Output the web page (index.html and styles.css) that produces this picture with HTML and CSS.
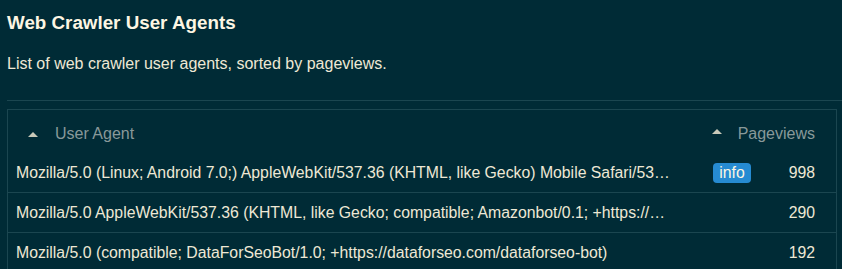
FILE: index.html
```html
<!DOCTYPE html>
<html lang="en">
<head>
<meta charset="utf-8">
<title>Web Crawler User Agents</title>
<link rel="stylesheet" href="styles.css">
</head>
<body>
<main class="page">
  <h1 class="title">Web Crawler User Agents</h1>
  <p class="subtitle">List of web crawler user agents, sorted by pageviews.</p>
  <hr class="rule">
  <div class="table">
    <div class="row head">
      <div class="cell ua"><span class="sort"></span><span>User Agent</span></div>
      <div class="cell views-head"><span class="sort"></span><span>Pageviews</span></div>
    </div>
    <div class="row">
      <div class="cell ua"><span class="ua-text">Mozilla/5.0 (Linux; Android 7.0;) AppleWebKit/537.36 (KHTML, like Gecko) Mobile Safari/537.36 (compatible; PetalBot;+https://webmaster.petalsearch.com/site/petalbot)</span></div>
      <div class="cell badge-cell"><span class="badge">info</span></div>
      <div class="cell views">998</div>
    </div>
    <div class="row">
      <div class="cell ua"><span class="ua-text">Mozilla/5.0 AppleWebKit/537.36 (KHTML, like Gecko; compatible; Amazonbot/0.1; +https://developer.amazon.com/support/amazonbot) Chrome/119.0.6045.214 Safari/537.36</span></div>
      <div class="cell badge-cell"></div>
      <div class="cell views">290</div>
    </div>
    <div class="row">
      <div class="cell ua"><span class="ua-text">Mozilla/5.0 (compatible; DataForSeoBot/1.0; +https://dataforseo.com/dataforseo-bot)</span></div>
      <div class="cell badge-cell"></div>
      <div class="cell views">192</div>
    </div>
  </div>
</main>
</body>
</html>
```
FILE: styles.css
```css
*, *::before, *::after {
  box-sizing: border-box;
}
html, body {
  margin: 0;
  padding: 0;
  background: #002b36;
}
body {
  font-family: "Liberation Sans", Arial, sans-serif;
  color: #eee8d5;
  overflow: hidden;
}
.page {
  padding: 12px 0 0 7px;
}
.title {
  margin: 0;
  font-size: 18.8px;
  line-height: 22px;
  font-weight: bold;
  color: #fdf6e3;
}
.subtitle {
  margin: 20px 0 0;
  font-size: 16px;
  line-height: 20px;
}
.rule {
  margin: 26px 0 0;
  border: 0;
  border-top: 1px solid #1b4650;
  height: 1px;
}
.table {
  margin: 8px 5px 0 0;
  border: 1px solid #1b4650;
}
.row {
  display: flex;
  align-items: center;
  height: 40px;
  padding: 0 21px 0 8px;
  border-bottom: 1px solid #1b4650;
  font-size: 15.8px;
}
.row.head {
  height: 43px;
  border-bottom: 0;
  color: #88999a;
  font-size: 16px;
  padding-top: 5px;
}
.cell.ua {
  flex: 1;
  min-width: 0;
  display: flex;
  align-items: center;
}
.ua-text {
  white-space: nowrap;
  overflow: hidden;
  text-overflow: ellipsis;
}
.head .ua .sort {
  margin: 0 17px 0 12px;
}
.sort {
  display: inline-block;
  width: 10px;
  height: 5px;
  border-left: 5px solid transparent;
  border-right: 5px solid transparent;
  border-bottom: 5px solid #c8c9b9;
  margin-top: -6px;
}
.views-head {
  display: flex;
  align-items: center;
  justify-content: flex-end;
}
.views-head .sort {
  margin-right: 16px;
}
.badge-cell {
  width: 83px;
  display: flex;
  justify-content: flex-end;
}
.badge {
  display: inline-block;
  margin-right: 3px;
  width: 38px;
  height: 20px;
  line-height: 20px;
  text-align: center;
  border-radius: 4px;
  background: #268bd2;
  color: #fdf6e3;
}
.views {
  width: 61px;
  text-align: right;
}
```
